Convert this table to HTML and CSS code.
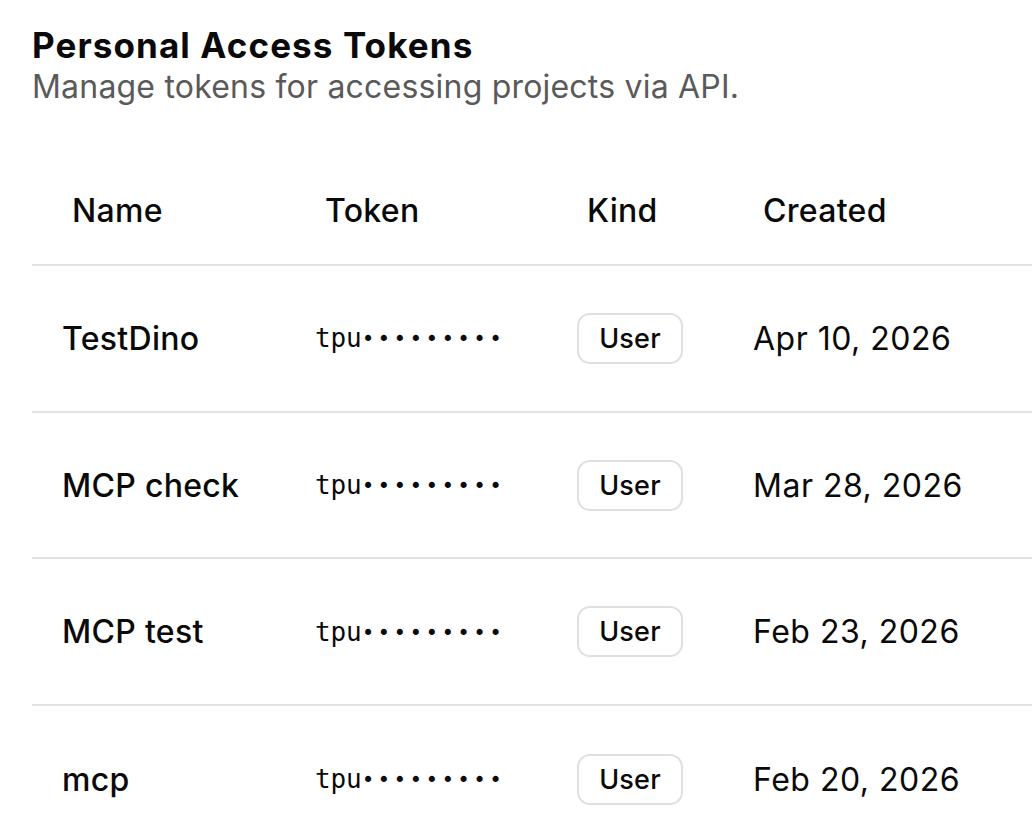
FILE: index.html
```html
<!DOCTYPE html>
<html lang="en">
<head>
<meta charset="utf-8">
<title>Personal Access Tokens</title>
<link rel="stylesheet" href="styles.css">
</head>
<body>
<main class="page">
  <header class="intro">
    <h1 class="title">Personal Access Tokens</h1>
    <p class="subtitle">Manage tokens for accessing projects via API.</p>
  </header>
  <div class="table">
    <div class="row head">
      <div class="cell">Name</div>
      <div class="cell">Token</div>
      <div class="cell">Kind</div>
      <div class="cell">Created</div>
    </div>
    <div class="row">
      <div class="cell name">TestDino</div>
      <div class="cell token">tpu<span class="mask">•••••••••</span></div>
      <div class="cell"><span class="badge">User</span></div>
      <div class="cell date">Apr 10, 2026</div>
    </div>
    <div class="row">
      <div class="cell name">MCP check</div>
      <div class="cell token">tpu<span class="mask">•••••••••</span></div>
      <div class="cell"><span class="badge">User</span></div>
      <div class="cell date">Mar 28, 2026</div>
    </div>
    <div class="row">
      <div class="cell name">MCP test</div>
      <div class="cell token">tpu<span class="mask">•••••••••</span></div>
      <div class="cell"><span class="badge">User</span></div>
      <div class="cell date">Feb 23, 2026</div>
    </div>
    <div class="row">
      <div class="cell name">mcp</div>
      <div class="cell token">tpu<span class="mask">•••••••••</span></div>
      <div class="cell"><span class="badge">User</span></div>
      <div class="cell date">Feb 20, 2026</div>
    </div>
  </div>
</main>
</body>
</html>
```
FILE: styles.css
```css
* { box-sizing: border-box; }
html, body { margin: 0; padding: 0; background: #fff; }
body {
  font-family: Inter, "Noto Sans", "Liberation Sans", sans-serif;
  color: #0a0a0a;
  overflow: hidden;
}
.page {
  padding: 24px 0 0 32px;
}
.intro { margin: 0; }
.title {
  margin: 0;
  font-size: 35px;
  font-weight: 700;
  line-height: 42px;
  letter-spacing: 1.1px;
  color: #0a0a0a;
}
.subtitle {
  margin: 0;
  font-size: 32px;
  line-height: 42px;
  font-weight: 400;
  letter-spacing: 0.2px;
  color: #5a5a5a;
}
.table {
  margin-top: 48px;
}
.row {
  display: grid;
  grid-template-columns: 253px 262px 176px 1fr;
  align-items: center;
  height: 146.7px;
  border-bottom: 2px solid #e2e2e2;
}
.row:last-child { border-bottom: none; }
.row.head {
  height: 110px;
  padding-left: 10px;
}
.cell {
  padding-left: 30px;
  font-size: 32px;
  font-weight: 500;
  letter-spacing: 0.3px;
  white-space: nowrap;
}
.token {
  font-family: "DejaVu Sans Mono", "Liberation Mono", monospace;
  font-size: 26px;
  font-weight: 400;
  letter-spacing: -0.1px;
}
.mask {
  font-size: 21px;
  letter-spacing: 3.3px;
  vertical-align: 1px;
}
.date { font-weight: 400; letter-spacing: 0.5px; }
.badge {
  display: inline-flex;
  align-items: center;
  justify-content: center;
  width: 106px;
  height: 51px;
  border: 2px solid #e0e0e0;
  border-radius: 13px;
  font-size: 27px;
  font-weight: 500;
  letter-spacing: 0.2px;
}
```
